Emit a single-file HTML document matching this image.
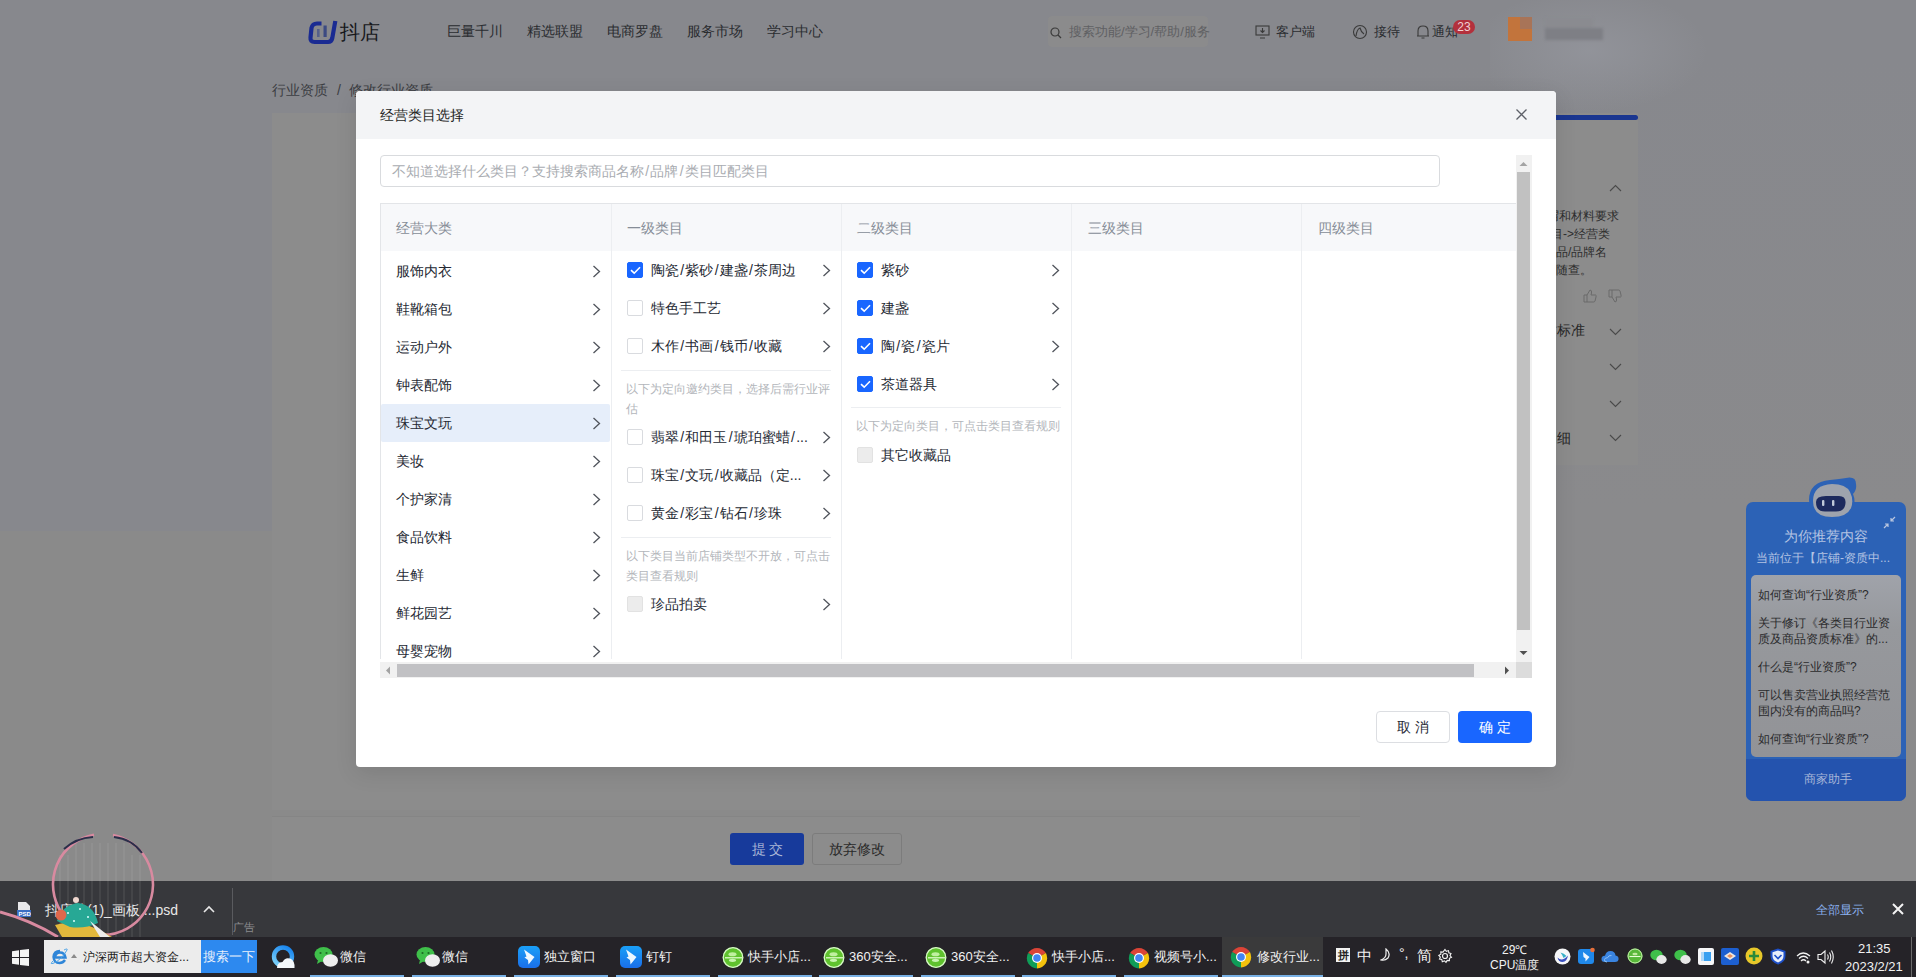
<!DOCTYPE html>
<html><head><meta charset="utf-8">
<style>
*{box-sizing:border-box;margin:0;padding:0}
html,body{width:1916px;height:977px;overflow:hidden;font-family:"Liberation Sans",sans-serif;background:#86888d}
.a{position:absolute}
.t{position:absolute;white-space:nowrap;line-height:1}
.sl{margin:0 1.25px}
body{text-spacing-trim:space-all}
/* background page */
#bg{position:absolute;left:0;top:0;width:1916px;height:881px;background:#87888d}
#bgl{position:absolute;left:0;top:531px;width:1360px;height:350px;background:#8a8a8a}
#bgr{position:absolute;left:1360px;top:60px;width:556px;height:821px;background:linear-gradient(#87888d,#8a8a8c 55%,#8a8a8b)}
#card{left:272px;top:113px;width:1088px;height:697px;background:#8c8c8c}
#foot{left:272px;top:816px;width:1088px;height:65px;background:#8c8c8c;border-top:1px solid #858585}
#rpanel{left:1556px;top:113px;width:82px;height:352px;background:#8c8c8c}
/* modal */
#modal{left:356px;top:91px;width:1200px;height:676px;background:#fff;border-radius:4px;overflow:hidden;box-shadow:0 6px 22px rgba(0,0,0,0.10)}
#mhead{left:0;top:0;width:1200px;height:48px;background:#f3f4f6}
.cj{font-size:14px;color:#252933}
.hd{font-size:14px;color:#868d97}
.note{font-size:12px;color:#b3b6bb;line-height:20px;white-space:normal}
.cb{position:absolute;width:16px;height:16px;border:1px solid #d9dbdf;border-radius:2px;background:#fff}
.cb.on{background:#1966ff;border-color:#1966ff}
.cb.dis{background:#ececec;border-color:#e2e2e2}
.arr{position:absolute;width:8px;height:12px}
/* download bar */
#dl{left:0;top:881px;width:1916px;height:56px;background:#37383c}
#tb{left:0;top:937px;width:1916px;height:40px;background:#252328}
.ti{position:absolute;top:937px;height:40px}
.ul{position:absolute;bottom:0;left:0;right:0;height:2px;background:#76b1e6}
.tt{position:absolute;top:13px;font-size:13px;color:#fff;white-space:nowrap;line-height:1}
</style></head>
<body>
<div id="bg"></div><div id="bgl"></div><div id="bgr"></div>
<div id="card" class="a"></div>
<div id="foot" class="a"></div>
<div id="rpanel" class="a"></div>
<div class="a" style="left:1540px;top:115px;width:98px;height:5px;background:#1a3690;border-radius:0 3px 3px 0"></div>
<svg class="a" style="left:1609px;top:184px" width="13" height="8" viewBox="0 0 13 8"><path d="M1 7 L6.5 1.5 L12 7" fill="none" stroke="#4a4a4a" stroke-width="1.1"/></svg>
<div class="t" style="left:1547px;top:210px;font-size:12px;color:#2e2e2e">谓和材料要求</div>
<div class="t" style="left:1551px;top:228px;font-size:12px;color:#2e2e2e">目-&gt;经营类</div>
<div class="t" style="left:1544px;top:246px;font-size:12px;color:#2e2e2e">商品/品牌名</div>
<div class="t" style="left:1544px;top:264px;font-size:12px;color:#2e2e2e">可随查。</div>
<svg class="a" style="left:1583px;top:289px" width="14" height="14" viewBox="0 0 14 14"><path d="M1 6 H4 V13 H1Z M4 6 L7 1 Q9 1 8.5 4 L8 6 H12.5 Q13.5 6 13 8 L12 12 Q11.6 13 10.5 13 H4" fill="none" stroke="#6a6a6a" stroke-width="1"/></svg>
<svg class="a" style="left:1608px;top:289px" width="14" height="14" viewBox="0 0 14 14"><path d="M1 1 H4 V8 H1Z M4 8 L7 13 Q9 13 8.5 10 L8 8 H12.5 Q13.5 8 13 6 L12 2 Q11.6 1 10.5 1 H4" fill="none" stroke="#6a6a6a" stroke-width="1"/></svg>
<div class="t" style="left:1543px;top:323px;font-size:14px;color:#262626">质标准</div>
<svg class="a" style="left:1609px;top:328px" width="13" height="8" viewBox="0 0 13 8"><path d="M1 1 L6.5 6.5 L12 1" fill="none" stroke="#4a4a4a" stroke-width="1.1"/></svg>
<svg class="a" style="left:1609px;top:363px" width="13" height="8" viewBox="0 0 13 8"><path d="M1 1 L6.5 6.5 L12 1" fill="none" stroke="#4a4a4a" stroke-width="1.1"/></svg>
<svg class="a" style="left:1609px;top:400px" width="13" height="8" viewBox="0 0 13 8"><path d="M1 1 L6.5 6.5 L12 1" fill="none" stroke="#4a4a4a" stroke-width="1.1"/></svg>
<svg class="a" style="left:1609px;top:434px" width="13" height="8" viewBox="0 0 13 8"><path d="M1 1 L6.5 6.5 L12 1" fill="none" stroke="#4a4a4a" stroke-width="1.1"/></svg>
<div class="t" style="left:1543px;top:431px;font-size:14px;color:#262626">明细</div>

<!-- header -->
<svg class="a" style="left:300px;top:14px" width="44" height="36" viewBox="0 0 44 36">
  <path d="M21.5 9.5 H17 Q12.5 9.5 11.5 14 L10.5 23.5 Q10 28 14.5 28 H28 Q31.5 28 32.3 24 L35.3 7" fill="none" stroke="#1a2b92" stroke-width="4.2" stroke-linejoin="round"/>
  <rect x="17" y="15" width="2.6" height="8" fill="#55608a"/><rect x="23.5" y="11.5" width="3.2" height="11.5" fill="#3c4a82"/>
</svg>
<div class="t" style="left:340px;top:22px;font-size:20px;color:#16171b;font-weight:500">抖店</div>
<div class="t" style="left:447px;top:24px;font-size:14px;color:#2a2c30">巨量千川</div>
<div class="t" style="left:527px;top:24px;font-size:14px;color:#2a2c30">精选联盟</div>
<div class="t" style="left:607px;top:24px;font-size:14px;color:#2a2c30">电商罗盘</div>
<div class="t" style="left:687px;top:24px;font-size:14px;color:#2a2c30">服务市场</div>
<div class="t" style="left:767px;top:24px;font-size:14px;color:#2a2c30">学习中心</div>
<div class="a" style="left:1048px;top:16px;width:160px;height:31px;background:#8b8b8c;border-radius:4px"></div>
<svg class="a" style="left:1050px;top:27px" width="12" height="12" viewBox="0 0 12 12"><circle cx="5" cy="5" r="4" stroke="#3a3a3a" stroke-width="1.2" fill="none"/><path d="M8 8 L11 11" stroke="#3a3a3a" stroke-width="1.2"/></svg>
<div class="t" style="left:1069px;top:25px;font-size:13px;color:#5f6063">搜索功能/学习/帮助/服务</div>
<svg class="a" style="left:1255px;top:25px" width="15" height="14" viewBox="0 0 15 14"><rect x="1" y="1" width="13" height="9" fill="none" stroke="#3a3a3a" stroke-width="1.1"/><path d="M7.5 3 V7 M5.5 5.5 L7.5 7.5 L9.5 5.5 M5 13 H10" stroke="#3a3a3a" stroke-width="1.1" fill="none"/></svg>
<div class="t" style="left:1276px;top:25px;font-size:13px;color:#2a2c30">客户端</div>
<svg class="a" style="left:1352px;top:24px" width="16" height="16" viewBox="0 0 16 16"><circle cx="8" cy="8" r="6.5" fill="none" stroke="#3a3a3a" stroke-width="1.1"/><path d="M4 12 Q5 5 8 4 Q9 8 12 10" fill="none" stroke="#3a3a3a" stroke-width="1.1"/></svg>
<div class="t" style="left:1374px;top:25px;font-size:13px;color:#2a2c30">接待</div>
<svg class="a" style="left:1416px;top:24px" width="14" height="16" viewBox="0 0 14 16"><path d="M2 12 V7 Q2 2 7 2 Q12 2 12 7 V12 H2 Z M1 12 H13 M5.5 14 H8.5" fill="none" stroke="#3a3a3a" stroke-width="1.1"/></svg>
<div class="t" style="left:1432px;top:25px;font-size:13px;color:#2a2c30">通知</div>
<div class="a" style="left:1453px;top:20px;width:22px;height:14px;border-radius:7px;background:#b3303c;color:#f0d0d4;font-size:12px;line-height:14px;text-align:center">23</div>
<div class="a" style="left:1490px;top:0px;width:220px;height:113px;background:radial-gradient(ellipse at 45% 45%,rgba(200,205,220,0.16),rgba(200,205,220,0) 70%)"></div>
<div class="a" style="left:1508px;top:17px;width:24px;height:24px;background:#c2743c"></div>
<div class="a" style="left:1520px;top:17px;width:12px;height:12px;background:#a87458"></div>
<div class="a" style="left:1545px;top:18px;width:48px;height:10px;background:#8a8b90;filter:blur(1.5px)"></div>
<div class="a" style="left:1545px;top:28px;width:58px;height:12px;background:#7e7f85;filter:blur(1.5px)"></div>

<div class="t" style="left:272px;top:83px;font-size:14px;color:#3b3d42">行业资质</div>
<div class="t" style="left:337px;top:83px;font-size:14px;color:#3b3d42">/</div>
<div class="t" style="left:349px;top:83px;font-size:14px;color:#3b3d42">修改行业资质</div>

<!-- modal -->
<div id="modal" class="a">
  <div id="mhead" class="a"></div>
</div>
<div class="t" style="left:380px;top:108px;font-size:14px;color:#1d1f24">经营类目选择</div>
<svg class="a" style="left:1515px;top:108px" width="13" height="13" viewBox="0 0 13 13"><path d="M1.5 1.5 L11.5 11.5 M11.5 1.5 L1.5 11.5" stroke="#5d6068" stroke-width="1.3"/></svg>
<div class="a" style="left:380px;top:155px;width:1060px;height:32px;border:1px solid #d9dbde;border-radius:4px;background:#fff"></div>
<div class="t" style="left:392px;top:164px;font-size:14px;color:#a9acb1">不知道选择什么类目？支持搜索商品名称<span class="sl">/</span>品牌<span class="sl">/</span>类目匹配类目</div>
<div class="a" style="left:380px;top:203px;width:1136px;height:456px;border-top:1px solid #e3e5e8;border-left:1px solid #e3e5e8;background:#fff"></div>
<div class="a" style="left:381px;top:204px;width:1135px;height:47px;background:#f7f8fa"></div>
<div class="a" style="left:611px;top:204px;width:1px;height:455px;background:#eceef1"></div>
<div class="a" style="left:841px;top:204px;width:1px;height:455px;background:#eceef1"></div>
<div class="a" style="left:1071px;top:204px;width:1px;height:455px;background:#eceef1"></div>
<div class="a" style="left:1301px;top:204px;width:1px;height:455px;background:#eceef1"></div>
<div class="t hd" style="left:396px;top:221px">经营大类</div>
<div class="t hd" style="left:627px;top:221px">一级类目</div>
<div class="t hd" style="left:857px;top:221px">二级类目</div>
<div class="t hd" style="left:1088px;top:221px">三级类目</div>
<div class="t hd" style="left:1318px;top:221px">四级类目</div>
<div class="a" style="left:381px;top:404px;width:229px;height:38px;background:#e6eefa;border-radius:2px"></div>
<div class="t cj" style="left:396px;top:264px">服饰内衣</div>
<svg class="a" style="left:592px;top:265px" width="9" height="13" viewBox="0 0 9 13"><path d="M1.5 1 L7.5 6.5 L1.5 12" fill="none" stroke="#50545c" stroke-width="1.3"/></svg>
<div class="t cj" style="left:396px;top:302px">鞋靴箱包</div>
<svg class="a" style="left:592px;top:303px" width="9" height="13" viewBox="0 0 9 13"><path d="M1.5 1 L7.5 6.5 L1.5 12" fill="none" stroke="#50545c" stroke-width="1.3"/></svg>
<div class="t cj" style="left:396px;top:340px">运动户外</div>
<svg class="a" style="left:592px;top:341px" width="9" height="13" viewBox="0 0 9 13"><path d="M1.5 1 L7.5 6.5 L1.5 12" fill="none" stroke="#50545c" stroke-width="1.3"/></svg>
<div class="t cj" style="left:396px;top:378px">钟表配饰</div>
<svg class="a" style="left:592px;top:379px" width="9" height="13" viewBox="0 0 9 13"><path d="M1.5 1 L7.5 6.5 L1.5 12" fill="none" stroke="#50545c" stroke-width="1.3"/></svg>
<div class="t cj" style="left:396px;top:416px">珠宝文玩</div>
<svg class="a" style="left:592px;top:417px" width="9" height="13" viewBox="0 0 9 13"><path d="M1.5 1 L7.5 6.5 L1.5 12" fill="none" stroke="#50545c" stroke-width="1.3"/></svg>
<div class="t cj" style="left:396px;top:454px">美妆</div>
<svg class="a" style="left:592px;top:455px" width="9" height="13" viewBox="0 0 9 13"><path d="M1.5 1 L7.5 6.5 L1.5 12" fill="none" stroke="#50545c" stroke-width="1.3"/></svg>
<div class="t cj" style="left:396px;top:492px">个护家清</div>
<svg class="a" style="left:592px;top:493px" width="9" height="13" viewBox="0 0 9 13"><path d="M1.5 1 L7.5 6.5 L1.5 12" fill="none" stroke="#50545c" stroke-width="1.3"/></svg>
<div class="t cj" style="left:396px;top:530px">食品饮料</div>
<svg class="a" style="left:592px;top:531px" width="9" height="13" viewBox="0 0 9 13"><path d="M1.5 1 L7.5 6.5 L1.5 12" fill="none" stroke="#50545c" stroke-width="1.3"/></svg>
<div class="t cj" style="left:396px;top:568px">生鲜</div>
<svg class="a" style="left:592px;top:569px" width="9" height="13" viewBox="0 0 9 13"><path d="M1.5 1 L7.5 6.5 L1.5 12" fill="none" stroke="#50545c" stroke-width="1.3"/></svg>
<div class="t cj" style="left:396px;top:606px">鲜花园艺</div>
<svg class="a" style="left:592px;top:607px" width="9" height="13" viewBox="0 0 9 13"><path d="M1.5 1 L7.5 6.5 L1.5 12" fill="none" stroke="#50545c" stroke-width="1.3"/></svg>
<div class="t cj" style="left:396px;top:644px">母婴宠物</div>
<svg class="a" style="left:592px;top:645px" width="9" height="13" viewBox="0 0 9 13"><path d="M1.5 1 L7.5 6.5 L1.5 12" fill="none" stroke="#50545c" stroke-width="1.3"/></svg>
<div class="cb on" style="left:627px;top:262px"><svg class="a" style="left:2px;top:3px" width="11" height="9" viewBox="0 0 11 9"><path d="M1 4.2 L4.2 7.2 L10 1.3" fill="none" stroke="#fff" stroke-width="1.6"/></svg></div>
<div class="t cj" style="left:651px;top:263px">陶瓷<span class="sl">/</span>紫砂<span class="sl">/</span>建盏<span class="sl">/</span>茶周边</div>
<svg class="a" style="left:822px;top:264px" width="9" height="13" viewBox="0 0 9 13"><path d="M1.5 1 L7.5 6.5 L1.5 12" fill="none" stroke="#50545c" stroke-width="1.3"/></svg>
<div class="cb " style="left:627px;top:300px"></div>
<div class="t cj" style="left:651px;top:301px">特色手工艺</div>
<svg class="a" style="left:822px;top:302px" width="9" height="13" viewBox="0 0 9 13"><path d="M1.5 1 L7.5 6.5 L1.5 12" fill="none" stroke="#50545c" stroke-width="1.3"/></svg>
<div class="cb " style="left:627px;top:338px"></div>
<div class="t cj" style="left:651px;top:339px">木作<span class="sl">/</span>书画<span class="sl">/</span>钱币<span class="sl">/</span>收藏</div>
<svg class="a" style="left:822px;top:340px" width="9" height="13" viewBox="0 0 9 13"><path d="M1.5 1 L7.5 6.5 L1.5 12" fill="none" stroke="#50545c" stroke-width="1.3"/></svg>
<div class="cb " style="left:627px;top:429px"></div>
<div class="t cj" style="left:651px;top:430px">翡翠<span class="sl">/</span>和田玉<span class="sl">/</span>琥珀蜜蜡<span class="sl">/</span>...</div>
<svg class="a" style="left:822px;top:431px" width="9" height="13" viewBox="0 0 9 13"><path d="M1.5 1 L7.5 6.5 L1.5 12" fill="none" stroke="#50545c" stroke-width="1.3"/></svg>
<div class="cb " style="left:627px;top:467px"></div>
<div class="t cj" style="left:651px;top:468px">珠宝<span class="sl">/</span>文玩<span class="sl">/</span>收藏品（定...</div>
<svg class="a" style="left:822px;top:469px" width="9" height="13" viewBox="0 0 9 13"><path d="M1.5 1 L7.5 6.5 L1.5 12" fill="none" stroke="#50545c" stroke-width="1.3"/></svg>
<div class="cb " style="left:627px;top:505px"></div>
<div class="t cj" style="left:651px;top:506px">黄金<span class="sl">/</span>彩宝<span class="sl">/</span>钻石<span class="sl">/</span>珍珠</div>
<svg class="a" style="left:822px;top:507px" width="9" height="13" viewBox="0 0 9 13"><path d="M1.5 1 L7.5 6.5 L1.5 12" fill="none" stroke="#50545c" stroke-width="1.3"/></svg>
<div class="cb dis" style="left:627px;top:596px"></div>
<div class="t cj" style="left:651px;top:597px">珍品拍卖</div>
<svg class="a" style="left:822px;top:598px" width="9" height="13" viewBox="0 0 9 13"><path d="M1.5 1 L7.5 6.5 L1.5 12" fill="none" stroke="#50545c" stroke-width="1.3"/></svg>
<div class="a" style="left:621px;top:370px;width:210px;height:1px;background:#eceef1"></div>
<div class="a note" style="left:626px;top:379px;width:210px">以下为定向邀约类目，选择后需行业评估</div>
<div class="a" style="left:621px;top:537px;width:210px;height:1px;background:#eceef1"></div>
<div class="a note" style="left:626px;top:546px;width:210px">以下类目当前店铺类型不开放，可点击类目查看规则</div>
<div class="cb on" style="left:857px;top:262px"><svg class="a" style="left:2px;top:3px" width="11" height="9" viewBox="0 0 11 9"><path d="M1 4.2 L4.2 7.2 L10 1.3" fill="none" stroke="#fff" stroke-width="1.6"/></svg></div>
<div class="t cj" style="left:881px;top:263px">紫砂</div>
<svg class="a" style="left:1051px;top:264px" width="9" height="13" viewBox="0 0 9 13"><path d="M1.5 1 L7.5 6.5 L1.5 12" fill="none" stroke="#50545c" stroke-width="1.3"/></svg>
<div class="cb on" style="left:857px;top:300px"><svg class="a" style="left:2px;top:3px" width="11" height="9" viewBox="0 0 11 9"><path d="M1 4.2 L4.2 7.2 L10 1.3" fill="none" stroke="#fff" stroke-width="1.6"/></svg></div>
<div class="t cj" style="left:881px;top:301px">建盏</div>
<svg class="a" style="left:1051px;top:302px" width="9" height="13" viewBox="0 0 9 13"><path d="M1.5 1 L7.5 6.5 L1.5 12" fill="none" stroke="#50545c" stroke-width="1.3"/></svg>
<div class="cb on" style="left:857px;top:338px"><svg class="a" style="left:2px;top:3px" width="11" height="9" viewBox="0 0 11 9"><path d="M1 4.2 L4.2 7.2 L10 1.3" fill="none" stroke="#fff" stroke-width="1.6"/></svg></div>
<div class="t cj" style="left:881px;top:339px">陶<span class="sl">/</span>瓷<span class="sl">/</span>瓷片</div>
<svg class="a" style="left:1051px;top:340px" width="9" height="13" viewBox="0 0 9 13"><path d="M1.5 1 L7.5 6.5 L1.5 12" fill="none" stroke="#50545c" stroke-width="1.3"/></svg>
<div class="cb on" style="left:857px;top:376px"><svg class="a" style="left:2px;top:3px" width="11" height="9" viewBox="0 0 11 9"><path d="M1 4.2 L4.2 7.2 L10 1.3" fill="none" stroke="#fff" stroke-width="1.6"/></svg></div>
<div class="t cj" style="left:881px;top:377px">茶道器具</div>
<svg class="a" style="left:1051px;top:378px" width="9" height="13" viewBox="0 0 9 13"><path d="M1.5 1 L7.5 6.5 L1.5 12" fill="none" stroke="#50545c" stroke-width="1.3"/></svg>
<div class="cb dis" style="left:857px;top:447px"></div>
<div class="t cj" style="left:881px;top:448px">其它收藏品</div>
<div class="a" style="left:851px;top:407px;width:210px;height:1px;background:#eceef1"></div>
<div class="a note" style="left:856px;top:416px;width:215px">以下为定向类目，可点击类目查看规则</div>
<div class="a" style="left:1516px;top:155px;width:16px;height:507px;background:#f1f1f1"></div>
<div class="a" style="left:1517px;top:172px;width:13px;height:458px;background:#c1c1c1"></div>
<svg class="a" style="left:1519px;top:161px" width="9" height="6" viewBox="0 0 9 6"><path d="M0.5 5 L4.5 1 L8.5 5Z" fill="#a3a3a3"/></svg>
<svg class="a" style="left:1519px;top:650px" width="9" height="6" viewBox="0 0 9 6"><path d="M0.5 1 L4.5 5 L8.5 1Z" fill="#505050"/></svg>
<div class="a" style="left:380px;top:662px;width:1136px;height:16px;background:#f1f1f1"></div>
<div class="a" style="left:397px;top:664px;width:1077px;height:13px;background:#c1c1c4"></div>
<svg class="a" style="left:385px;top:666px" width="6" height="9" viewBox="0 0 6 9"><path d="M5 0.5 L1 4.5 L5 8.5Z" fill="#a3a3a3"/></svg>
<svg class="a" style="left:1504px;top:666px" width="6" height="9" viewBox="0 0 6 9"><path d="M1 0.5 L5 4.5 L1 8.5Z" fill="#505050"/></svg>
<div class="a" style="left:1516px;top:662px;width:16px;height:16px;background:#dcdcdc"></div>
<div class="a" style="left:1376px;top:711px;width:74px;height:32px;border:1px solid #dcdee2;border-radius:4px;background:#fff;font-size:14px;color:#252933;text-align:center;line-height:30px;letter-spacing:4px;text-indent:4px">取消</div>
<div class="a" style="left:1458px;top:711px;width:74px;height:32px;border-radius:4px;background:#1966ff;font-size:14px;color:#fff;text-align:center;line-height:32px;letter-spacing:4px;text-indent:4px">确定</div>

<!-- download bar -->
<div id="dl" class="a"></div>
<div id="tb" class="a"></div>
<div class="a" style="left:730px;top:833px;width:74px;height:32px;background:#173a9b;border-radius:3px;color:#a9b6d6;font-size:14px;text-align:center;line-height:32px;letter-spacing:3px;text-indent:3px">提交</div>
<div class="a" style="left:812px;top:833px;width:90px;height:32px;border:1px solid #7c7c7c;border-radius:3px;color:#2a2a2a;font-size:14px;text-align:center;line-height:30px">放弃修改</div>
<div class="a" style="left:1746px;top:502px;width:160px;height:299px;background:#2c62b6;border-radius:7px"></div>
<div class="a" style="left:1751px;top:575px;width:150px;height:182px;background:linear-gradient(#a0a3aa,#96989c 30%,#929397);border-radius:5px"></div>
<div class="a" style="left:1746px;top:759px;width:160px;height:42px;background:#2453ae;border-radius:0 0 7px 7px"></div>
<svg class="a" style="left:1806px;top:474px" width="54" height="48" viewBox="0 0 54 48"><path d="M3 26 Q3 8 24 6 Q34 5 40 4 Q50 2 50 10 Q51 16 47 20 Q50 27 47 35 Q42 46 26 46 Q3 46 3 26Z" fill="#2c62b6"/><path d="M7 27 Q7 11 26 10 Q40 10 44 18 Q48 26 45 34 Q41 43 26 43 Q7 43 7 27Z" fill="#9ea3ad"/><path d="M10 28 Q10 22 20 22 H33 Q40 22 39.5 29 Q39 37.5 30 37.5 H19 Q10 37.5 10 28Z" fill="#1d2a5e"/><rect x="16" y="26" width="2.4" height="6" rx="1" fill="#c0c8d8"/><rect x="26" y="26" width="2.4" height="6" rx="1" fill="#c0c8d8"/></svg>
<svg class="a" style="left:1883px;top:516px" width="13" height="13" viewBox="0 0 13 13"><path d="M12 1 L8 5 M8 2 V5 H11 M1 12 L5 8 M2 8 H5 V11" fill="none" stroke="#b9c6e0" stroke-width="1.2"/></svg>
<div class="t" style="left:1784px;top:529px;font-size:14px;color:#b3c3e3">为你推荐内容</div>
<div class="t" style="left:1756px;top:552px;font-size:12px;color:#b3c3e3">当前位于【店铺-资质中...</div>
<div class="t" style="left:1758px;top:589px;font-size:12px;color:#2a2a2c">如何查询“行业资质”?</div>
<div class="t" style="left:1758px;top:617px;font-size:12px;color:#2a2a2c">关于修订《各类目行业资</div>
<div class="t" style="left:1758px;top:633px;font-size:12px;color:#2a2a2c">质及商品资质标准》的...</div>
<div class="t" style="left:1758px;top:661px;font-size:12px;color:#2a2a2c">什么是“行业资质”?</div>
<div class="t" style="left:1758px;top:689px;font-size:12px;color:#2a2a2c">可以售卖营业执照经营范</div>
<div class="t" style="left:1758px;top:705px;font-size:12px;color:#2a2a2c">围内没有的商品吗?</div>
<div class="t" style="left:1758px;top:733px;font-size:12px;color:#2a2a2c">如何查询“行业资质”?</div>
<div class="t" style="left:1804px;top:773px;font-size:12px;color:#a7b6d8">商家助手</div>
<svg class="a" style="left:0px;top:825px;z-index:5" width="160" height="112" viewBox="0 0 160 112">
<path d="M60 30 V112" stroke="#d8d8d8" stroke-opacity="0.22" stroke-width="0.8"/><path d="M68 30 V112" stroke="#d8d8d8" stroke-opacity="0.22" stroke-width="0.8"/><path d="M76 18 V112" stroke="#d8d8d8" stroke-opacity="0.22" stroke-width="0.8"/><path d="M84 18 V112" stroke="#d8d8d8" stroke-opacity="0.22" stroke-width="0.8"/><path d="M92 18 V112" stroke="#d8d8d8" stroke-opacity="0.22" stroke-width="0.8"/><path d="M100 18 V112" stroke="#d8d8d8" stroke-opacity="0.22" stroke-width="0.8"/><path d="M108 18 V112" stroke="#d8d8d8" stroke-opacity="0.22" stroke-width="0.8"/><path d="M116 18 V112" stroke="#d8d8d8" stroke-opacity="0.22" stroke-width="0.8"/><path d="M124 18 V112" stroke="#d8d8d8" stroke-opacity="0.22" stroke-width="0.8"/><path d="M132 30 V112" stroke="#d8d8d8" stroke-opacity="0.22" stroke-width="0.8"/><path d="M140 30 V112" stroke="#d8d8d8" stroke-opacity="0.22" stroke-width="0.8"/>
<path d="M94 9.7 A50 50.5 0 1 0 113 9.9" fill="none" stroke="#d88aa0" stroke-width="2.6"/>
<path d="M64 24 Q76 13 93 12" fill="none" stroke="#2a2f4a" stroke-width="2"/>
<path d="M114 12 Q132 14 142 28" fill="none" stroke="#2a2f4a" stroke-width="2"/>
<path d="M0 87 Q30 95 58 112" fill="none" stroke="#d88aa0" stroke-width="3"/>
<path d="M55 100 Q80 92 112 112 H62Z" fill="#e2b83c"/>
<path d="M57 96 Q62 80 78 78 Q94 80 98 98 Q85 104 70 102Z" fill="#27a895"/>
<circle cx="68" cy="88" r="1" fill="#dff"/><circle cx="80" cy="84" r="1" fill="#dff"/><circle cx="88" cy="92" r="1" fill="#dff"/><circle cx="74" cy="96" r="1" fill="#dff"/>
<circle cx="61" cy="90" r="5.5" fill="#e0684c"/>
<circle cx="76" cy="75" r="3" fill="#f0d8d0"/>
<path d="M90 96 L110 112 H100 Z" fill="#ececec"/>
</svg>
<svg class="a" style="left:17px;top:901px" width="14" height="17" viewBox="0 0 14 17"><path d="M1 1 H9 L13 5 V16 H1Z" fill="#e8e8ea"/><rect x="0" y="9" width="14" height="7" fill="#3a6fc4"/><text x="1.5" y="15" font-size="6" font-family="Liberation Sans" fill="#fff" font-weight="bold">PSD</text></svg>
<div class="t" style="left:45px;top:903px;font-size:14px;color:#e8e8e8">抖店技(1)_画板 ...psd</div>
<svg class="a" style="left:203px;top:905px" width="12" height="8" viewBox="0 0 12 8"><path d="M1 7 L6 2 L11 7" fill="none" stroke="#e8e8e8" stroke-width="1.6"/></svg>
<div class="a" style="left:232px;top:888px;width:1px;height:47px;background:#5a5b5f"></div>
<div class="t" style="left:233px;top:922px;font-size:11px;color:#8a8b8e">广告</div>
<div class="t" style="left:1816px;top:904px;font-size:12px;color:#8ab0ee">全部显示</div>
<svg class="a" style="left:1892px;top:903px" width="12" height="12" viewBox="0 0 12 12"><path d="M1 1 L11 11 M11 1 L1 11" stroke="#f4f4f4" stroke-width="2"/></svg>
<svg class="a" style="left:12px;top:949px" width="17" height="17" viewBox="0 0 17 17"><path d="M0 2.3 L7 1.3 V8 H0Z M8 1.1 L17 0 V8 H8Z M0 9 H7 V15.7 L0 14.7Z M8 9 H17 V17 L8 15.9Z" fill="#f4f4f4"/></svg>
<div class="a" style="left:44px;top:940px;width:157px;height:33px;background:#ececec"></div>
<div class="a" style="left:201px;top:940px;width:56px;height:33px;background:#2d89ef;color:#e8f0fb;font-size:13px;line-height:33px;text-align:center">搜索一下</div>
<svg class="a" style="left:50px;top:948px" width="19" height="17" viewBox="0 0 19 17"><path d="M15.5 9.5 H5 Q5.5 4.5 10 4.5 Q14.5 4.5 15.5 9.5 Z" fill="none" stroke="#2f86d8" stroke-width="2.4"/><path d="M15 12 Q13 15 9.5 15 Q4 15 3.5 9 Q4 3 10 3" fill="none" stroke="#2f86d8" stroke-width="2.4"/><path d="M3 13 Q-1 17 4 15 Q12 11 17 2 Q18 0 14 2" fill="none" stroke="#4aa3e8" stroke-width="1"/></svg>
<svg class="a" style="left:71px;top:954px" width="6" height="4" viewBox="0 0 6 4"><path d="M0 4 L3 0 L6 4Z" fill="#8a8a8a"/></svg>
<div class="t" style="left:83px;top:951px;font-size:12px;color:#202020">沪深两市超大资金...</div>
<svg class="a" style="left:271px;top:944px" width="25" height="25" viewBox="0 0 25 25"><defs><linearGradient id="qq" x1="0.8" y1="0" x2="0.2" y2="1"><stop offset="0" stop-color="#1a86ee"/><stop offset="1" stop-color="#7ad0fa"/></linearGradient></defs><circle cx="12" cy="12.5" r="9" fill="none" stroke="url(#qq)" stroke-width="4.4"/><path d="M6 24 Q6 18.5 11.5 18 Q14 13 19 14.5 Q24 16.5 23.5 24 Z" fill="#f4f8fc"/></svg>
<div class="a" style="left:310px;top:975px;width:94px;height:2px;background:#78b0e4"></div>
<svg class="a" style="left:314px;top:946px" width="25" height="22" viewBox="0 0 25 22"><ellipse cx="9.5" cy="8.5" rx="9" ry="7.5" fill="#3fbf4a"/><path d="M4 14 L3 18 L8 15Z" fill="#3fbf4a"/><ellipse cx="16.5" cy="14.5" rx="7.5" ry="6.2" fill="#eeeeee"/><circle cx="6.5" cy="7" r="1.1" fill="#1d6b24"/><circle cx="12.5" cy="7" r="1.1" fill="#1d6b24"/></svg>
<div class="t" style="left:340px;top:950px;font-size:13px;color:#f2f2f2">微信</div>
<div class="a" style="left:412px;top:975px;width:94px;height:2px;background:#78b0e4"></div>
<svg class="a" style="left:416px;top:946px" width="25" height="22" viewBox="0 0 25 22"><ellipse cx="9.5" cy="8.5" rx="9" ry="7.5" fill="#3fbf4a"/><path d="M4 14 L3 18 L8 15Z" fill="#3fbf4a"/><ellipse cx="16.5" cy="14.5" rx="7.5" ry="6.2" fill="#eeeeee"/><circle cx="6.5" cy="7" r="1.1" fill="#1d6b24"/><circle cx="12.5" cy="7" r="1.1" fill="#1d6b24"/></svg>
<div class="t" style="left:442px;top:950px;font-size:13px;color:#f2f2f2">微信</div>
<div class="a" style="left:514px;top:975px;width:94px;height:2px;background:#78b0e4"></div>
<svg class="a" style="left:518px;top:946px" width="22" height="22" viewBox="0 0 22 22"><defs><linearGradient id="gd518" x1="0" y1="0" x2="0" y2="1"><stop offset="0" stop-color="#1aa0f8"/><stop offset="1" stop-color="#1a6ee8"/></linearGradient></defs><rect x="0" y="0" width="22" height="22" rx="5" fill="url(#gd518)"/><path d="M6 3.5 L16.5 11 L10.5 18.5 L10 14 L6.5 11.5 L8.5 10.5 Z" fill="#eef8ff"/></svg>
<div class="t" style="left:544px;top:950px;font-size:13px;color:#f2f2f2">独立窗口</div>
<div class="a" style="left:616px;top:975px;width:94px;height:2px;background:#78b0e4"></div>
<svg class="a" style="left:620px;top:946px" width="22" height="22" viewBox="0 0 22 22"><defs><linearGradient id="gd620" x1="0" y1="0" x2="0" y2="1"><stop offset="0" stop-color="#1aa0f8"/><stop offset="1" stop-color="#1a6ee8"/></linearGradient></defs><rect x="0" y="0" width="22" height="22" rx="5" fill="url(#gd620)"/><path d="M6 3.5 L16.5 11 L10.5 18.5 L10 14 L6.5 11.5 L8.5 10.5 Z" fill="#eef8ff"/></svg>
<div class="t" style="left:646px;top:950px;font-size:13px;color:#f2f2f2">钉钉</div>
<div class="a" style="left:718px;top:975px;width:94px;height:2px;background:#78b0e4"></div>
<svg class="a" style="left:722px;top:946px" width="23" height="23" viewBox="0 0 23 23"><circle cx="11" cy="11.5" r="10.2" fill="#5fc22e"/><circle cx="11" cy="11.5" r="9.8" fill="none" stroke="#d8f8c8" stroke-width="1.3"/><ellipse cx="10.5" cy="8.3" rx="4" ry="2" fill="#c0f0a0"/><ellipse cx="10.5" cy="14.3" rx="3.6" ry="1.6" fill="#c8f4b0"/><path d="M3 11.8 H20" stroke="#e8ffd8" stroke-width="1.2"/></svg>
<div class="t" style="left:748px;top:950px;font-size:13px;color:#f2f2f2">快手小店...</div>
<div class="a" style="left:819px;top:975px;width:94px;height:2px;background:#78b0e4"></div>
<svg class="a" style="left:823px;top:946px" width="23" height="23" viewBox="0 0 23 23"><circle cx="11" cy="11.5" r="10.2" fill="#5fc22e"/><circle cx="11" cy="11.5" r="9.8" fill="none" stroke="#d8f8c8" stroke-width="1.3"/><ellipse cx="10.5" cy="8.3" rx="4" ry="2" fill="#c0f0a0"/><ellipse cx="10.5" cy="14.3" rx="3.6" ry="1.6" fill="#c8f4b0"/><path d="M3 11.8 H20" stroke="#e8ffd8" stroke-width="1.2"/></svg>
<div class="t" style="left:849px;top:950px;font-size:13px;color:#f2f2f2">360安全...</div>
<div class="a" style="left:921px;top:975px;width:94px;height:2px;background:#78b0e4"></div>
<svg class="a" style="left:925px;top:946px" width="23" height="23" viewBox="0 0 23 23"><circle cx="11" cy="11.5" r="10.2" fill="#5fc22e"/><circle cx="11" cy="11.5" r="9.8" fill="none" stroke="#d8f8c8" stroke-width="1.3"/><ellipse cx="10.5" cy="8.3" rx="4" ry="2" fill="#c0f0a0"/><ellipse cx="10.5" cy="14.3" rx="3.6" ry="1.6" fill="#c8f4b0"/><path d="M3 11.8 H20" stroke="#e8ffd8" stroke-width="1.2"/></svg>
<div class="t" style="left:951px;top:950px;font-size:13px;color:#f2f2f2">360安全...</div>
<div class="a" style="left:1022px;top:975px;width:94px;height:2px;background:#78b0e4"></div>
<svg class="a" style="left:1025px;top:946px" width="24" height="24" viewBox="0 0 24 24"><path d="M12 12 L3.1 7 A10.5 10.5 0 0 1 20.9 7Z" fill="#db4437"/><path d="M12 12 L20.9 7 A10.5 10.5 0 0 1 12 22.5Z" fill="#f4c20d"/><path d="M12 12 L12 22.5 A10.5 10.5 0 0 1 3.1 7Z" fill="#0f9d58"/><circle cx="12" cy="12" r="5" fill="#fff"/><circle cx="12" cy="12" r="3.8" fill="#4285f4"/></svg>
<div class="t" style="left:1052px;top:950px;font-size:13px;color:#f2f2f2">快手小店...</div>
<div class="a" style="left:1124px;top:975px;width:94px;height:2px;background:#78b0e4"></div>
<svg class="a" style="left:1127px;top:946px" width="24" height="24" viewBox="0 0 24 24"><path d="M12 12 L3.1 7 A10.5 10.5 0 0 1 20.9 7Z" fill="#db4437"/><path d="M12 12 L20.9 7 A10.5 10.5 0 0 1 12 22.5Z" fill="#f4c20d"/><path d="M12 12 L12 22.5 A10.5 10.5 0 0 1 3.1 7Z" fill="#0f9d58"/><circle cx="12" cy="12" r="5" fill="#fff"/><circle cx="12" cy="12" r="3.8" fill="#4285f4"/></svg>
<div class="t" style="left:1154px;top:950px;font-size:13px;color:#f2f2f2">视频号小...</div>
<div class="a" style="left:1222px;top:937px;width:101px;height:40px;background:#3a3a3b"></div>
<div class="a" style="left:1222px;top:975px;width:101px;height:2px;background:#78b0e4"></div>
<svg class="a" style="left:1229px;top:945px" width="24" height="24" viewBox="0 0 24 24"><path d="M12 12 L3.1 7 A10.5 10.5 0 0 1 20.9 7Z" fill="#db4437"/><path d="M12 12 L20.9 7 A10.5 10.5 0 0 1 12 22.5Z" fill="#f4c20d"/><path d="M12 12 L12 22.5 A10.5 10.5 0 0 1 3.1 7Z" fill="#0f9d58"/><circle cx="12" cy="12" r="5" fill="#fff"/><circle cx="12" cy="12" r="3.8" fill="#4285f4"/></svg>
<div class="t" style="left:1257px;top:950px;font-size:13px;color:#f2f2f2">修改行业...</div>
<div class="a" style="left:1336px;top:948px;width:14px;height:14px;background:#f2f2f2;color:#1f1f20;font-size:11px;line-height:14px;text-align:center;font-weight:bold">拼</div>
<div class="t" style="left:1357px;top:948px;font-size:15px;color:#f2f2f2">中</div>
<svg class="a" style="left:1380px;top:948px" width="12" height="14" viewBox="0 0 12 14"><path d="M6 1 Q11 5 8 10 Q5 13 1 12 Q6 10 6 6 Q6 3 6 1Z" fill="none" stroke="#f2f2f2" stroke-width="1.2"/></svg>
<div class="t" style="left:1399px;top:946px;font-size:14px;color:#f2f2f2">°,</div>
<div class="t" style="left:1417px;top:948px;font-size:15px;color:#f2f2f2">简</div>
<svg class="a" style="left:1437px;top:948px" width="16" height="16" viewBox="0 0 16 16"><circle cx="8" cy="8" r="2.5" fill="none" stroke="#f2f2f2" stroke-width="1.2"/><path d="M8 1.5 L9.3 3.3 L11.5 2.6 L11.8 4.8 L14 5.5 L13 7.5 L14.5 9.3 L12.4 10.3 L12.4 12.6 L10.2 12.4 L9 14.4 L7.5 12.8 L5.3 13.8 L4.8 11.5 L2.5 11 L3.4 9 L1.8 7.3 L3.9 6.2 L3.8 3.9 L6 4.1Z" fill="none" stroke="#f2f2f2" stroke-width="1.1"/></svg>
<div class="t" style="left:1502px;top:944px;font-size:12px;color:#f2f2f2">29℃</div>
<div class="t" style="left:1490px;top:959px;font-size:12px;color:#f2f2f2">CPU温度</div>
<svg class="a" style="left:1554px;top:948px" width="17" height="17" viewBox="0 0 17 17"><circle cx="8.5" cy="8.5" r="8" fill="#f6f6f8"/><path d="M3.5 9.5 Q8 14.5 14 7.5 Q13 13.5 8.5 14 Q4.5 14 3.5 9.5Z" fill="#3a50c0"/><path d="M6.5 4.5 Q10 5 12.5 8 L9.5 10 Q8.5 7 6.5 4.5Z" fill="#38b0c8"/></svg>
<svg class="a" style="left:1578px;top:947px" width="17" height="18" viewBox="0 0 17 18"><rect x="0" y="2" width="16" height="15" rx="3" fill="#2088ea"/><path d="M5 5 L11.5 10 L7.5 14.5 L7.5 11.5 L5.5 10 Z" fill="#eef6ff"/><circle cx="14.5" cy="3" r="2.3" fill="#e8703a"/></svg>
<svg class="a" style="left:1601px;top:950px" width="18" height="13" viewBox="0 0 18 13"><path d="M4 12 Q0 12 0.5 8.5 Q1 5.5 4 5.8 Q5 1 9.5 1 Q14 1 14.5 5.5 Q18 6 17.5 9.5 Q17 12 14 12Z" fill="#3a84e0"/><path d="M6 12 Q3 12 3.5 9.5 Q4 7.5 6.5 7.8 Q7.5 5 10.5 5.5" fill="none" stroke="#8ec0f4" stroke-width="1"/></svg>
<svg class="a" style="left:1627px;top:948px" width="16" height="16" viewBox="0 0 16 16"><circle cx="8" cy="8" r="7.5" fill="#58b83a"/><circle cx="8" cy="8" r="7" fill="none" stroke="#c8f0b0" stroke-width="1"/><path d="M2.5 8.5 H13.5" stroke="#e8ffd8" stroke-width="1.1"/><ellipse cx="8" cy="6" rx="2.6" ry="1.3" fill="#c0e8a0"/></svg>
<svg class="a" style="left:1650px;top:949px" width="17" height="16" viewBox="0 0 17 16"><ellipse cx="6.5" cy="6" rx="6.2" ry="5.3" fill="#3fbf4a"/><ellipse cx="11.5" cy="10.5" rx="5.2" ry="4.4" fill="#e8e8e8"/></svg>
<svg class="a" style="left:1674px;top:949px" width="17" height="16" viewBox="0 0 17 16"><ellipse cx="6.5" cy="6" rx="6.2" ry="5.3" fill="#3fbf4a"/><ellipse cx="11.5" cy="10.5" rx="5.2" ry="4.4" fill="#e8e8e8"/></svg>
<svg class="a" style="left:1698px;top:948px" width="16" height="17" viewBox="0 0 16 17"><rect x="0" y="0" width="16" height="17" rx="2" fill="#f6f6f8"/><rect x="3" y="4" width="10" height="9" fill="#3aa0f0"/><rect x="3" y="4" width="3" height="9" fill="#b0d8f8"/></svg>
<svg class="a" style="left:1721px;top:948px" width="18" height="17" viewBox="0 0 18 17"><rect x="0" y="0" width="18" height="17" rx="2" fill="#1d5fd0"/><path d="M3 8 L9 4 L15 8 L9 12Z" fill="#f0e8e0"/><path d="M6 8 L9 6 L12 8 L9 10Z" fill="#e89060"/></svg>
<svg class="a" style="left:1745px;top:947px" width="18" height="18" viewBox="0 0 18 18"><circle cx="9" cy="9" r="8.5" fill="#e8c82a"/><path d="M9 4 V14 M4 9 H14" stroke="#2a8a3a" stroke-width="2.6"/></svg>
<svg class="a" style="left:1770px;top:948px" width="16" height="17" viewBox="0 0 16 17"><path d="M8 0.5 L15.5 3 V8 Q15.5 14 8 16.5 Q0.5 14 0.5 8 V3Z" fill="#1d4fc8"/><path d="M8 2.5 L13.5 4.3 V8 Q13.5 12.5 8 14.5 Q2.5 12.5 2.5 8 V4.3Z" fill="#e8eefa"/><path d="M4.5 7 L8 10.5 L11.5 7" fill="none" stroke="#1d4fc8" stroke-width="1.6"/></svg>
<svg class="a" style="left:1796px;top:950px" width="15" height="14" viewBox="0 0 15 14"><path d="M1 6 Q7 0 14 6 M3 8.5 Q7.5 4 12 8.5 M5 11 Q7.5 8.5 10 11" fill="none" stroke="#f2f2f2" stroke-width="1.2"/><circle cx="12" cy="12" r="1.5" fill="#f2f2f2"/></svg>
<svg class="a" style="left:1817px;top:949px" width="18" height="16" viewBox="0 0 18 16"><path d="M1 5.5 H4 L8 2 V14 L4 10.5 H1Z" fill="none" stroke="#f2f2f2" stroke-width="1.1"/><path d="M10.5 5.5 Q12 8 10.5 10.5 M12.5 3.5 Q15 8 12.5 12.5 M14.5 1.5 Q18 8 14.5 14.5" fill="none" stroke="#f2f2f2" stroke-width="1.1"/></svg>
<div class="t" style="left:1858px;top:942px;font-size:13px;color:#f2f2f2">21:35</div>
<div class="t" style="left:1845px;top:960px;font-size:13px;color:#f2f2f2">2023/2/21</div>
<div class="a" style="left:1911px;top:937px;width:1px;height:40px;background:#6a6a6a"></div>
</body></html>
